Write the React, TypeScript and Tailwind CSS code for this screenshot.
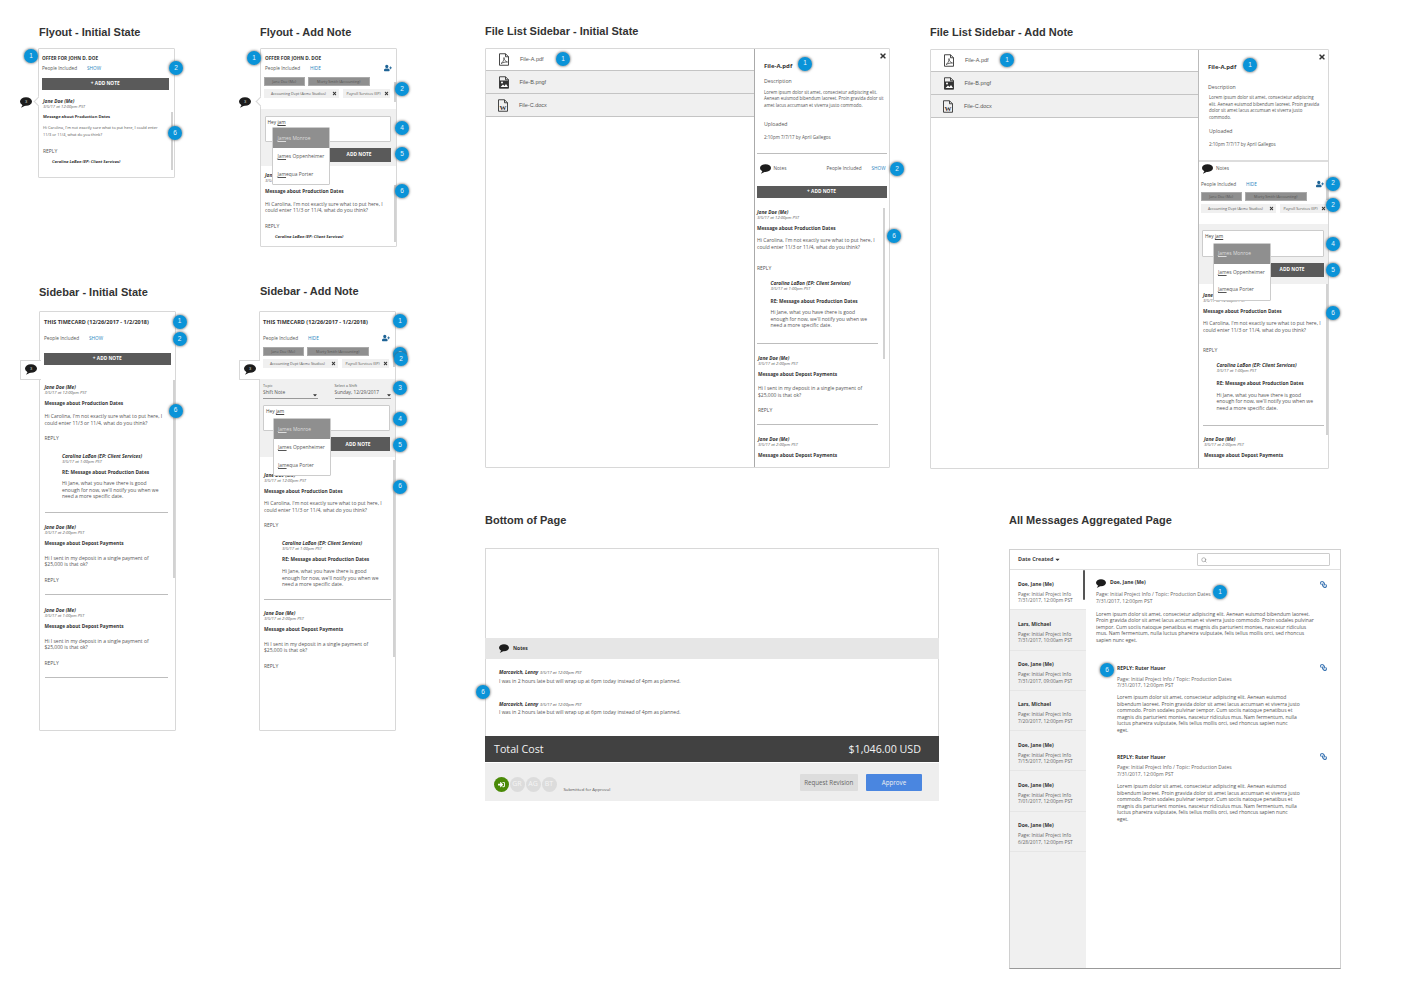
import type { ReactNode } from "react";
import { FaCaretDown, FaLink, FaSignInAlt, FaTimes, FaUserPlus } from "react-icons/fa";
import { Search } from "lucide-react";

const sans = "font-['Liberation_Sans',Arial,sans-serif]";

const CAROLINA = ["Hi Carolina, I'm not exactly sure what to put here, I", "could enter 11/3 or 11/4, what do you think?"];
const JANE_REPLY = ["Hi Jane, what you have there is good", "enough for now, we'll notify you when we", "need a more specific date."];
const DEPOSIT = ["Hi I sent in my deposit in a single payment of", "$25,000 is that ok?"];
const LOREM_LONG = [
  "Lorem ipsum dolor sit amet, consectetur adipiscing elit. Aenean euismod",
  "bibendum laoreet. Proin gravida dolor sit amet lacus accumsan et viverra justo",
  "commodo. Proin sodales pulvinar tempor. Cum sociis natoque penatibus et",
  "magnis dis parturient montes, nascetur ridiculus mus. Nam fermentum, nulla",
  "luctus pharetra vulputate, felis tellus mollis orci, sed rhoncus sapien nunc",
  "eget.",
];

function Title({ className, children }: { className: string; children: ReactNode }) {
  return <h2 className={`absolute ${sans} text-[11px] leading-[14px] font-bold text-[#333] whitespace-nowrap ${className}`}>{children}</h2>;
}

function Badge({ n, className }: { n: number; className: string }) {
  return (
    <div className={`absolute z-30 -translate-x-1/2 -translate-y-1/2 size-[14px] rounded-full bg-[#0a93d8] flex items-center justify-center text-[#e8f4fb] text-[6.5px] leading-none ${sans} shadow-[0_0_2px_1px_rgba(90,90,90,0.5)] ${className}`}>
      {n}
    </div>
  );
}

function Chat({ n, className = "" }: { n?: number; className?: string }) {
  return (
    <svg viewBox="0 0 24 21" className={className}>
      <ellipse cx="12" cy="8.5" rx="12" ry="8.5" fill="#1c1c1c" />
      <path d="M6 14 L2 21 L12 16 Z" fill="#1c1c1c" />
      {n ? <text x="12" y="11.5" fontSize="8" fill="#ddd" textAnchor="middle" fontFamily="Liberation Sans">{n}</text> : null}
    </svg>
  );
}

function FileIcon({ kind }: { kind: "pdf" | "img" | "doc" }) {
  return (
    <svg viewBox="0 0 24 26" className="w-[12px] h-[13px] shrink-0">
      <path d="M3 1.5h12l6 6v17H3z M15 1.5v6h6" fill="none" stroke="#333" strokeWidth="1.8" />
      {kind === "pdf" && <path d="M6 21c4-2 6-7 6-12 0 5 3 8 7 9-5 0-9 1-13 3z" fill="none" stroke="#333" strokeWidth="1.4" />}
      {kind === "img" && (
        <>
          <rect x="3" y="9" width="18" height="15" fill="#333" />
          <circle cx="8" cy="13" r="2" fill="#fff" />
          <path d="M5 22l5-5 3 3 3-4 4 6z" fill="#fff" />
        </>
      )}
      {kind === "doc" && <text x="12" y="22" fontSize="14" fontWeight="bold" textAnchor="middle" fill="#333" fontFamily="Liberation Serif">W</text>}
    </svg>
  );
}

function Note({
  name = "Jane Doe (Me)",
  date,
  subject,
  lines,
  reply = true,
  compact = false,
  className = "",
  subjectClass = "mt-[4px]",
  bodyClass = "mt-[7px]",
  replyClass = "mt-[9px]",
}: {
  name?: string;
  date: string;
  subject: string;
  lines: string[];
  reply?: boolean;
  compact?: boolean;
  className?: string;
  subjectClass?: string;
  bodyClass?: string;
  replyClass?: string;
}) {
  return (
    <div className={`whitespace-nowrap ${className}`}>
      <div className="h-[6px] leading-[6px] text-[4.8px] font-bold italic text-[#333]">{name}</div>
      <div className="h-[6px] leading-[6px] text-[4.2px] italic text-[#666]">{date}</div>
      <div className={`h-[6px] leading-[6px] ${compact ? "text-[4.1px]" : "text-[4.8px]"} font-bold text-[#333] ${subjectClass}`}>{subject}</div>
      <div className={`${compact ? "text-[3.95px]" : "text-[5px]"} leading-[6px] text-[#555] ${bodyClass}`}>
        {lines.map((l) => (
          <div key={l} className="h-[6.5px]">{l}</div>
        ))}
      </div>
      {reply && <div className={`h-[6px] leading-[6px] text-[5px] text-[#555] ${replyClass}`}>REPLY</div>}
    </div>
  );
}

function AddBar({ className }: { className: string }) {
  return (
    <div className={`h-[12px] bg-[#5a5a5a] flex items-center justify-center text-white text-[4.8px] font-bold ${className}`}>+ ADD NOTE</div>
  );
}

function People({ label, className = "", icon }: { label: string; className?: string; icon?: ReactNode }) {
  return (
    <div className={`relative h-[6px] leading-[6px] text-[4.7px] text-[#555] flex ${className}`}>
      <span className="w-[45px]">People Included</span>
      <span className="text-[#2a85c0]">{label}</span>
      {icon}
    </div>
  );
}

function Chips({ className }: { className: string }) {
  return (
    <div className={`text-[3.7px] whitespace-nowrap ${className}`}>
      <div className="flex gap-[3.5px] h-[8.7px]">
        <div className="w-[40.5px] bg-[#8f8f8f] text-[#555] border border-[#aaa] flex items-center justify-center">Jane Doe (Me)</div>
        <div className="w-[61.5px] bg-[#8f8f8f] text-[#555] border border-[#aaa] flex items-center justify-center">Morty Smith (Accounting)</div>
      </div>
      <div className="flex gap-[3.5px] h-[8.5px] mt-[3.8px]">
        <div className="w-[75px] bg-[#f0f0f0] text-[#555] flex items-center justify-between pl-[7px] pr-[2px]">
          Accounting Dept (Acme Studios) <FaTimes className="size-[5px] text-[#333]" />
        </div>
        <div className="w-[47.5px] bg-[#f0f0f0] text-[#555] flex items-center justify-between pl-[4px] pr-[1px]">
          Payroll Services (EP) <FaTimes className="size-[5px] text-[#333]" />
        </div>
      </div>
    </div>
  );
}

function Underlined({ rest }: { rest: string }) {
  return (
    <span>
      <span className="underline">Jam</span>
      {rest}
    </span>
  );
}

function Composer({
  className,
  areaClass,
  buttonClass,
  dropClass,
  topics,
}: {
  className: string;
  areaClass: string;
  buttonClass: string;
  dropClass: string;
  topics?: boolean;
}) {
  return (
    <div className={`relative bg-[#f0f0f0] ${className}`}>
      {topics && (
        <div className="flex pt-[4.5px] pl-[3px] text-[#555] whitespace-nowrap">
          <div className="w-[55px] border-b border-[#999] h-[15.5px] relative">
            <div className="text-[3.8px] leading-[5px]">Topic</div>
            <div className="text-[4.8px] leading-[7px] mt-[1px]">Shift Note</div>
            <FaCaretDown className="absolute right-0 top-[9px] size-[6px] text-[#333]" />
          </div>
          <div className="w-[56px] ml-[16.5px] border-b border-[#999] h-[15.5px] relative">
            <div className="text-[3.8px] leading-[5px]">Select a Shift</div>
            <div className="text-[4.8px] leading-[7px] mt-[1px]">Sunday, 12/29/2017</div>
            <FaCaretDown className="absolute right-[-1px] top-[9px] size-[6px] text-[#333]" />
          </div>
        </div>
      )}
      <div className={`bg-white border border-[#ccc] rounded-[1px] text-[4.8px] leading-[6px] text-[#444] pl-[2px] pt-[2.5px] ${areaClass}`}>
        Hey <span className="underline">jam</span>
      </div>
      <div className={`h-[14px] bg-[#5a5a5a] flex items-center justify-center text-white text-[4.8px] font-bold ${buttonClass}`}>ADD NOTE</div>
      <div className={`absolute z-20 w-[58px] h-[58px] bg-white border border-[#ccc] rounded-[1px] text-[4.9px] text-[#555] whitespace-nowrap ${dropClass}`}>
        <div className="h-[20px] bg-[#8f8f8f] text-[#ddd] flex items-center pl-[4.5px]">
          <Underlined rest="es Monroe" />
        </div>
        <div className="h-[17px] flex items-center pl-[4.5px]">
          <Underlined rest="es Oppenheimer" />
        </div>
        <div className="h-[18px] flex items-center pl-[4.5px]">
          <Underlined rest="equa Porter" />
        </div>
      </div>
    </div>
  );
}

function Hr({ className }: { className: string }) {
  return <div className={`h-px bg-[#bdbdbd] ${className}`} />;
}

function Scroll({ className }: { className: string }) {
  return <div className={`absolute w-[2px] bg-[#d2d2d2] ${className}`} />;
}

const Frame = "absolute bg-white border border-[#d8d8d8] rounded-[1px] overflow-hidden";

function FileRows() {
  const rows = [
    { kind: "pdf" as const, name: "File-A.pdf", cls: "h-[22px] pl-[12px]" },
    { kind: "img" as const, name: "File-B.pngf", cls: "h-[23px] pl-[11.5px] bg-[#f0f0f0]" },
    { kind: "doc" as const, name: "File-C.docx", cls: "h-[23px] pl-[11px] bg-[#f0f0f0]" },
  ];
  return (
    <div className={`${sans} text-[5.5px] text-[#555]`}>
      {rows.map((r) => (
        <div key={r.name} className={`flex items-center gap-[10px] border-b border-b-[#c4c4c4] ${r.cls}`}>
          <FileIcon kind={r.kind} />
          {r.name}
        </div>
      ))}
    </div>
  );
}

function AggItem({ name, date, active }: { name: string; date: string; active?: boolean }) {
  return (
    <div className={`relative h-[40.3px] pt-[10.5px] pl-[8px] border-b border-b-[#e6e6e6] whitespace-nowrap ${active ? "bg-white" : ""}`}>
      <div className="h-[6px] leading-[6px] text-[5px] font-bold text-[#333]">{name}</div>
      <div className="mt-[4px] text-[4.85px] leading-[6.5px] text-[#666]">Page: Initial Project Info</div>
      <div className="text-[4.85px] leading-[6.5px] text-[#666]">{date}</div>
      {active && <div className="absolute right-[1px] top-0 w-[2.5px] h-[30px] bg-[#555] rounded-[1px]" />}
    </div>
  );
}

function AggReply({ className }: { className: string }) {
  return (
    <div className={`ml-[21px] whitespace-nowrap ${className}`}>
      <div className="h-[6px] leading-[6px] text-[5px] font-bold text-[#333]">REPLY: Ruter Hauer</div>
      <div className="mt-[4.75px] text-[5px] leading-[6.5px] text-[#666]">
        <div>Page: Initial Project Info / Topic: Production Dates</div>
        <div>7/31/2017, 12:00pm PST</div>
      </div>
      <div className="mt-[5.75px] text-[5px] leading-[6.5px] text-[#555]">
        {LOREM_LONG.map((l) => (
          <div key={l}>{l}</div>
        ))}
      </div>
    </div>
  );
}

function PlainNote() {
  return (
    <>
      <div className="h-[6px] leading-[6px] text-[4.8px] italic text-[#555]">
        <span className="font-bold text-[#333]">Marcovich, Lenny</span> <span className="text-[4.2px]">3/5/17 at 12:00pm PST</span>
      </div>
      <div className="mt-[2.5px] h-[6px] leading-[6px] text-[5px] text-[#555]">I was in 2 hours late but will wrap up at 6pm today instead of 4pm as planned.</div>
    </>
  );
}

export default function App() {
  return (
    <div className="relative w-[1414px] h-[983px] bg-white overflow-hidden font-['Open_Sans',sans-serif]">
      <Title className="left-[39px] top-[25px]">Flyout - Initial State</Title>
      <Title className="left-[260px] top-[25px]">Flyout - Add Note</Title>
      <Title className="left-[39px] top-[285px]">Sidebar - Initial State</Title>
      <Title className="left-[260px] top-[284px]">Sidebar - Add Note</Title>
      <Title className="left-[485px] top-[24px]">File List Sidebar - Initial State</Title>
      <Title className="left-[930px] top-[25px]">File List Sidebar - Add Note</Title>
      <Title className="left-[485px] top-[513px]">Bottom of Page</Title>
      <Title className="left-[1009px] top-[513px]">All Messages Aggregated Page</Title>

      {/* Flyout - initial */}
      <div className={`${Frame} left-[38px] top-[48px] w-[137px] h-[130px] pl-[3px] pt-[6px]`}>
        <div className="h-[6px] leading-[6px] text-[4.7px] font-bold text-[#333]">OFFER FOR JOHN D. DOE</div>
        <People label="SHOW" className="mt-[4px]" />
        <AddBar className="mt-[7px] w-[126.5px]" />
        <Note
          compact
          className="mt-[8px] ml-[1px]"
          date="3/5/17 at 12:00pm PST"
          subject="Message about Production Dates"
          lines={["Hi Carolina, I'm not exactly sure what to put here, I could enter", "11/3 or 11/4, what do you think?"]}
          subjectClass="mt-[3.5px]"
          bodyClass="mt-[5.75px]"
          replyClass="mt-[9.25px]"
        />
        <div className="mt-[5px] ml-[10px] h-[6px] leading-[6px] text-[4.1px] font-bold italic text-[#333] whitespace-nowrap">Carolina LaBon (EP: Client Services)</div>
        <Scroll className="left-[132px] top-[63px] h-[58px]" />
      </div>
      <div className="absolute z-10 left-[34.5px] top-[98px] size-[7px] rotate-45 bg-white border-l border-b border-[#d8d8d8]" />
      <Chat n={3} className="absolute left-[20px] top-[97px] w-[12px] h-[11px]" />

      {/* Flyout - add note */}
      <div className={`${Frame} left-[260px] top-[48px] w-[137px] h-[199px] pt-[6px]`}>
        <div className="pl-[4px] h-[6px] leading-[6px] text-[4.7px] font-bold text-[#333]">OFFER FOR JOHN D. DOE</div>
        <People
          label="HIDE"
          className="mt-[4px] ml-[4px]"
          icon={<FaUserPlus className="absolute left-[119px] top-[-1px] size-[8px] text-[#1f6496]" />}
        />
        <Chips className="mt-[6px] pl-[3px]" />
        <Composer
          className="mt-[11.3px] h-[57px] pt-[6.5px]"
          areaClass="ml-[3.5px] w-[126.5px] h-[26px]"
          buttonClass="mt-[6px] ml-[66px] w-[64px]"
          dropClass="left-[11px] top-[18px]"
        />
        <Note
          className="mt-[6px] ml-[4px]"
          date="3/5/17 at 12:00pm PST"
          subject="Message about Production Dates"
          lines={CAROLINA}
          bodyClass="mt-[6.25px]"
          replyClass="mt-[9.25px]"
        />
        <div className="mt-[5.5px] ml-[14px] h-[6px] leading-[6px] text-[4.1px] font-bold italic text-[#333] whitespace-nowrap">Carolina LaBon (EP: Client Services)</div>
        <Scroll className="left-[132.5px] top-[33px] h-[20px]" />
        <Scroll className="left-[132.5px] top-[136px] h-[57px]" />
      </div>
      <div className="absolute z-10 left-[256.5px] top-[98px] size-[7px] rotate-45 bg-white border-l border-b border-[#d8d8d8]" />
      <Chat n={3} className="absolute left-[239px] top-[97px] w-[12px] h-[11px]" />

      {/* Sidebar - initial */}
      <div className={`${Frame} left-[39px] top-[311px] w-[137px] h-[420px] pl-[4px] pt-[7px]`}>
        <div className="h-[6px] leading-[6px] text-[5.5px] font-bold text-[#333] whitespace-nowrap">THIS TIMECARD (12/26/2017 - 1/2/2018)</div>
        <People label="SHOW" className="mt-[10px]" />
        <AddBar className="mt-[11.5px] w-[126.5px]" />
        <Note className="mt-[19.5px] ml-[0.5px]" date="3/5/17 at 12:00pm PST" subject="Message about Production Dates" lines={CAROLINA} bodyClass="mt-[7.25px]" replyClass="mt-[8.75px]" />
        <Note
          className="mt-[11.5px] ml-[18px]"
          name="Carolina LaBon (EP: Client Services)"
          date="3/5/17 at 1:00pm PST"
          subject="RE: Message about Production Dates"
          lines={JANE_REPLY}
          reply={false}
          bodyClass="mt-[5.75px]"
        />
        <Hr className="mt-[11.75px] ml-[0.5px] w-[123.5px]" />
        <Note className="mt-[11.5px] ml-[0.5px]" date="3/5/17 at 2:00pm PST" subject="Message about Depost Payments" lines={DEPOSIT} bodyClass="mt-[8.75px]" replyClass="mt-[8.75px]" />
        <Hr className="mt-[11.5px] ml-[0.5px] w-[123.5px]" />
        <Note className="mt-[12px] ml-[0.5px]" date="3/5/17 at 1:00pm PST" subject="Message about Depost Payments" lines={DEPOSIT} bodyClass="mt-[8.75px]" replyClass="mt-[8.75px]" />
        <Hr className="mt-[11px] ml-[0.5px] w-[123.5px]" />
        <Scroll className="left-[133px] top-[68px] h-[198px]" />
      </div>
      <div className="absolute z-10 left-[20px] top-[360px] w-[21px] h-[19.5px] bg-white border border-r-0 border-[#d8d8d8] rounded-l-[1px] flex items-center pl-[3.5px]">
        <Chat n={3} className="w-[12px] h-[11px]" />
      </div>

      {/* Sidebar - add note */}
      <div className={`${Frame} left-[259px] top-[311px] w-[137px] h-[420px] pt-[7px]`}>
        <div className="pl-[3px] h-[6px] leading-[6px] text-[5.5px] font-bold text-[#333] whitespace-nowrap">THIS TIMECARD (12/26/2017 - 1/2/2018)</div>
        <People
          label="HIDE"
          className="mt-[10px] ml-[3px]"
          icon={<FaUserPlus className="absolute left-[119px] top-[-1px] size-[8px] text-[#1f6496]" />}
        />
        <Chips className="mt-[6px] pl-[3px]" />
        <Composer
          topics
          className="mt-[11px] h-[78px]"
          areaClass="mt-[6px] ml-[3px] w-[126.5px] h-[26.5px]"
          buttonClass="mt-[6px] ml-[66px] w-[64px]"
          dropClass="left-[12.5px] top-[39.5px]"
        />
        <Note
          className="mt-[15px] ml-[4px]"
          date="3/5/17 at 12:00pm PST"
          subject="Message about Production Dates"
          lines={CAROLINA}
          bodyClass="mt-[6.25px]"
          replyClass="mt-[8.75px]"
        />
        <Note
          className="mt-[12.5px] ml-[22px]"
          name="Carolina LaBon (EP: Client Services)"
          date="3/5/17 at 1:00pm PST"
          subject="RE: Message about Production Dates"
          lines={JANE_REPLY}
          reply={false}
          bodyClass="mt-[5.75px]"
        />
        <Hr className="mt-[11px] ml-[4px] w-[127px]" />
        <Note className="mt-[10.5px] ml-[4px]" date="3/5/17 at 2:00pm PST" subject="Message about Depost Payments" lines={DEPOSIT} bodyClass="mt-[8.75px]" replyClass="mt-[8.75px]" />
        <Scroll className="left-[133px] top-[148px] h-[197px]" />
        <Scroll className="left-[132.5px] top-[40px] h-[15px]" />
      </div>
      <div className="absolute z-10 left-[239px] top-[360px] w-[21px] h-[19.5px] bg-white border border-r-0 border-[#d8d8d8] rounded-l-[1px] flex items-center pl-[3.5px]">
        <Chat n={3} className="w-[12px] h-[11px]" />
      </div>

      {/* File list - initial */}
      <div className={`${Frame} left-[485px] top-[48px] w-[405px] h-[420px] flex`}>
        <div className="w-[268px] shrink-0"><FileRows /></div>
        <div className="relative flex-1 border-l border-l-[#aaa] pt-[13px] whitespace-nowrap">
          <FaTimes className="absolute right-[2px] top-[3px] size-[8px] text-[#333]" />
          <div className="pl-[9px] h-[8px] leading-[8px] text-[6px] font-bold text-[#333]">File-A.pdf</div>
          <div className="pl-[9px] mt-[8px] h-[6px] leading-[6px] text-[5.2px] text-[#555]">Description</div>
          <div className="pl-[9px] mt-[4.75px] text-[4.4px] leading-[6.5px] text-[#555]">
            <div>Lorem ipsum dolor sit amet, consectetur adipiscing elit.</div>
            <div>Aenean euismod bibendum laoreet. Proin gravida dolor sit</div>
            <div>amet lacus accumsan et viverra justo commodo.</div>
          </div>
          <div className="pl-[9px] mt-[12.75px] h-[6px] leading-[6px] text-[5.2px] text-[#555]">Uploaded</div>
          <div className="pl-[9px] mt-[6.5px] h-[6px] leading-[6px] text-[4.5px] text-[#555]">2:10pm 7/7/17 by April  Gallegos</div>
          <Hr className="mt-[13.5px] ml-[1.5px] w-[130px]" />
          <div className="relative mt-[8.5px] h-[12px] flex items-center pl-[4.5px] text-[4.7px] text-[#555]">
            <Chat className="w-[11px] h-[10px] mr-[3px]" />
            Notes
            <span className="absolute left-[71.5px]">People Included</span>
            <span className="absolute left-[116.5px] text-[#2a85c0]">SHOW</span>
          </div>
          <AddBar className="mt-[11.5px] ml-[1.5px] w-[130px]" />
          <Note className="mt-[11px] ml-[2px]" date="3/5/17 at 12:00pm PST" subject="Message about Production Dates" lines={CAROLINA} bodyClass="mt-[6.25px]" replyClass="mt-[14.25px]" />
          <Note
            className="mt-[9px] ml-[15.5px]"
            name="Carolina LaBon (EP: Client Services)"
            date="3/5/17 at 1:00pm PST"
            subject="RE: Message about Production Dates"
            subjectClass="mt-[6px]"
            lines={JANE_REPLY}
            reply={false}
            bodyClass="mt-[5.75px]"
          />
          <Hr className="mt-[14.25px] ml-[2px] w-[120.5px]" />
          <Note className="mt-[10.75px] ml-[3px]" date="3/5/17 at 2:00pm PST" subject="Message about Depost Payments" lines={DEPOSIT} bodyClass="mt-[8.25px]" replyClass="mt-[8.75px]" />
          <Hr className="mt-[11.5px] ml-[2px] w-[120.5px]" />
          <Note className="mt-[10.5px] ml-[3px]" date="3/5/17 at 2:00pm PST" subject="Message about Depost Payments" lines={[]} reply={false} />
          <Scroll className="left-[128px] top-[159px] h-[151px]" />
        </div>
      </div>

      {/* File list - add note */}
      <div className={`${Frame} left-[930px] top-[49px] w-[399px] h-[420px] flex`}>
        <div className="w-[267px] shrink-0"><FileRows /></div>
        <div className="relative flex-1 border-l border-l-[#bbb] pt-[13px] whitespace-nowrap">
          <FaTimes className="absolute right-[2px] top-[3px] size-[8px] text-[#333]" />
          <div className="pl-[9px] h-[8px] leading-[8px] text-[6px] font-bold text-[#333]">File-A.pdf</div>
          <div className="pl-[9px] mt-[13px] h-[6px] leading-[6px] text-[5.2px] text-[#555]">Description</div>
          <div className="pl-[10px] mt-[4.25px] text-[4.4px] leading-[6.5px] text-[#555]">
            <div>Lorem ipsum dolor sit amet, consectetur adipiscing</div>
            <div>elit. Aenean euismod bibendum laoreet. Proin gravida</div>
            <div>dolor sit amet lacus accumsan et viverra justo</div>
            <div>commodo.</div>
          </div>
          <div className="pl-[10px] mt-[7.75px] h-[6px] leading-[6px] text-[5.2px] text-[#555]">Uploaded</div>
          <div className="pl-[10px] mt-[7px] h-[6px] leading-[6px] text-[4.5px] text-[#555]">2:10pm 7/7/17 by April  Gallegos</div>
          <div className="mt-[13px] h-[2px] bg-[#ddd]" />
          <div className="mt-[0.5px] h-[12px] flex items-center pl-[3px] text-[4.7px] text-[#555]">
            <Chat className="w-[11px] h-[10px] mr-[3px]" />
            Notes
          </div>
          <People
            label="HIDE"
            className="mt-[6.5px] ml-[2px]"
            icon={<FaUserPlus className="absolute left-[115px] top-[-1px] size-[8px] text-[#1f6496]" />}
          />
          <Chips className="mt-[5px] pl-[2px]" />
          <Composer
            className="mt-[11px] h-[60px] pt-[6px]"
            areaClass="ml-[3px] w-[122px] h-[27px]"
            buttonClass="mt-[6px] ml-[61px] w-[64px]"
            dropClass="left-[13.5px] top-[19px]"
          />
          <Note className="mt-[8px] ml-[4px]" date="3/5/17 at 12:00pm PST" subject="Message about Production Dates" lines={CAROLINA} bodyClass="mt-[6.25px]" replyClass="mt-[14.25px]" />
          <Note
            className="mt-[9px] ml-[17.5px]"
            name="Carolina LaBon (EP: Client Services)"
            date="3/5/17 at 1:00pm PST"
            subject="RE: Message about Production Dates"
            subjectClass="mt-[6px]"
            lines={JANE_REPLY}
            reply={false}
            bodyClass="mt-[5.25px]"
          />
          <Hr className="mt-[14.25px] ml-[4px] w-[121px]" />
          <Note className="mt-[10px] ml-[5px]" date="3/5/17 at 2:00pm PST" subject="Message about Depost Payments" lines={[]} reply={false} />
          <Scroll className="left-[126.5px] top-[234px] h-[151px]" />
          <Scroll className="left-[126.5px] top-[130px] h-[20px]" />
        </div>
      </div>

      {/* Bottom of page */}
      <div className="absolute left-[485px] top-[548px] w-[454px] flex flex-col">
        <div className="h-[90px] border border-b-0 border-[#d8d8d8]" />
        <div className="h-[21px] bg-[#e6e6e6] flex items-center pl-[14px] text-[5px] font-bold text-[#333]">
          <Chat className="w-[10px] h-[9px] mr-[4px]" />
          Notes
        </div>
        <div className="h-[77px] border-x border-[#d8d8d8] pl-[13px] pt-[10px] whitespace-nowrap">
          <PlainNote />
          <div className="h-[17px]" />
          <PlainNote />
        </div>
        <div className="h-[26px] bg-[#414141] flex items-center justify-between pl-[9px] pr-[18px] text-[#f2f2f2] text-[10.7px]">
          <span>Total Cost</span>
          <span>$1,046.00 USD</span>
        </div>
        <div className="mt-px h-[38px] bg-[#eeeeee] flex items-center pl-[8.5px] pr-[17px]">
          <div className="flex gap-px mt-[4px]">
            <div className="size-[15px] rounded-full bg-[#4a8a08] flex items-center justify-center text-white">
              <FaSignInAlt className="size-[7px]" />
            </div>
            {["GR", "AG", "BT"].map((s) => (
              <div key={s} className="size-[15px] rounded-full bg-[#dcdcdc] flex items-center justify-center text-[7px] text-[#f5f5f5]">{s}</div>
            ))}
          </div>
          <span className="ml-[7px] mt-[14px] text-[4.3px] text-[#555]">Submitted for Approval</span>
          <div className="ml-auto mt-[1px] w-[58.5px] h-[16.5px] bg-[#dddddd] rounded-[1px] flex items-center justify-center text-[6.2px] text-[#666]">Request Revision</div>
          <div className="ml-[8px] mt-[1px] w-[56px] h-[17.5px] bg-[#4a86e0] rounded-[1px] flex items-center justify-center text-[6.2px] text-[#f0f0f0]">Approve</div>
        </div>
      </div>

      {/* All messages */}
      <div className="absolute left-[1009px] top-[549px] w-[332px] h-[420px] bg-white border border-[#d0d0d0] border-b-[#999] flex flex-col overflow-hidden">
        <div className="h-[20px] shrink-0 border-b border-[#e0e0e0] flex items-center pl-[8px] pr-[10px] text-[5.4px] font-bold text-[#444]">
          Date Created
          <FaCaretDown className="size-[7px] ml-[1px] text-[#333]" />
          <div className="ml-auto w-[133px] h-[13px] border border-[#ccc] rounded-[1px] flex items-center pl-[3px] text-[#777]">
            <Search className="size-[6px]" />
          </div>
        </div>
        <div className="flex flex-1">
          <div className="w-[76px] bg-[#f0f0f0] shrink-0">
            <AggItem active name="Doe, Jane (Me)" date="7/31/2017, 12:00pm PST" />
            <AggItem name="Lars, Michael" date="7/31/2017, 10:00am PST" />
            <AggItem name="Doe, Jane (Me)" date="7/31/2017, 09:00am PST" />
            <AggItem name="Lars, Michael" date="7/20/2017, 12:00pm PST" />
            <AggItem name="Doe, Jane (Me)" date="7/15/2017, 12:00pm PST" />
            <AggItem name="Doe, Jane (Me)" date="7/01/2017, 12:00pm PST" />
            <AggItem name="Doe, Jane (Me)" date="6/28/2017, 12:00pm PST" />
          </div>
          <div className="relative flex-1 pl-[10px] pt-[8.5px] whitespace-nowrap">
            <div className="flex items-center h-[9px] text-[5px] font-bold text-[#333]">
              <Chat className="w-[10px] h-[9px] mr-[4px]" />
              Doe, Jane (Me)
            </div>
            <div className="mt-[3.75px] text-[5px] leading-[6.5px] text-[#666]">
              <div>Page: Initial Project Info / Topic: Production Dates</div>
              <div>7/31/2017, 12:00pm PST</div>
            </div>
            <div className="mt-[6.25px] text-[5px] leading-[6.5px] text-[#555]">
              <div>Lorem ipsum dolor sit amet, consectetur adipiscing elit. Aenean euismod bibendum laoreet.</div>
              <div>Proin gravida dolor sit amet lacus accumsan et viverra justo commodo. Proin sodales pulvinar</div>
              <div>tempor. Cum sociis natoque penatibus et magnis dis parturient montes, nascetur ridiculus</div>
              <div>mus. Nam fermentum, nulla luctus pharetra vulputate, felis tellus mollis orci, sed rhoncus</div>
              <div>sapien nunc eget.</div>
            </div>
            <AggReply className="mt-[21.75px]" />
            <AggReply className="mt-[20.25px]" />
            <FaLink className="absolute left-[234px] top-[11px] size-[7px] -scale-x-100 text-[#3f78b5]" />
            <FaLink className="absolute left-[234px] top-[94px] size-[7px] -scale-x-100 text-[#3f78b5]" />
            <FaLink className="absolute left-[234px] top-[183px] size-[7px] -scale-x-100 text-[#3f78b5]" />
          </div>
        </div>
      </div>

      {/* Annotation badges */}
      <Badge n={1} className="left-[31px] top-[56px]" />
      <Badge n={2} className="left-[176px] top-[68px]" />
      <Badge n={6} className="left-[175px] top-[133px]" />
      <Badge n={1} className="left-[254px] top-[58px]" />
      <Badge n={2} className="left-[402px] top-[89px]" />
      <Badge n={4} className="left-[402px] top-[128px]" />
      <Badge n={5} className="left-[402px] top-[154px]" />
      <Badge n={6} className="left-[402px] top-[191px]" />
      <Badge n={1} className="left-[179.5px] top-[321.5px]" />
      <Badge n={2} className="left-[179.5px] top-[339px]" />
      <Badge n={6} className="left-[175.5px] top-[410.5px]" />
      <Badge n={1} className="left-[400px] top-[321px]" />
      <Badge n={2} className="left-[400px] top-[354px]" />
      <Badge n={2} className="left-[401px] top-[359px]" />
      <Badge n={3} className="left-[400px] top-[388px]" />
      <Badge n={4} className="left-[400px] top-[419px]" />
      <Badge n={5} className="left-[400px] top-[445px]" />
      <Badge n={6} className="left-[400px] top-[486.5px]" />
      <Badge n={1} className="left-[563px] top-[59px]" />
      <Badge n={1} className="left-[805px] top-[63.5px]" />
      <Badge n={2} className="left-[897px] top-[169px]" />
      <Badge n={6} className="left-[894px] top-[236px]" />
      <Badge n={1} className="left-[1007px] top-[60px]" />
      <Badge n={1} className="left-[1250px] top-[65px]" />
      <Badge n={2} className="left-[1333px] top-[183.5px]" />
      <Badge n={2} className="left-[1333px] top-[205px]" />
      <Badge n={4} className="left-[1333px] top-[244px]" />
      <Badge n={5} className="left-[1333px] top-[270px]" />
      <Badge n={6} className="left-[1333px] top-[313px]" />
      <Badge n={6} className="left-[483px] top-[692px]" />
      <Badge n={1} className="left-[1220px] top-[592px]" />
      <Badge n={6} className="left-[1107px] top-[670px]" />
    </div>
  );
}
